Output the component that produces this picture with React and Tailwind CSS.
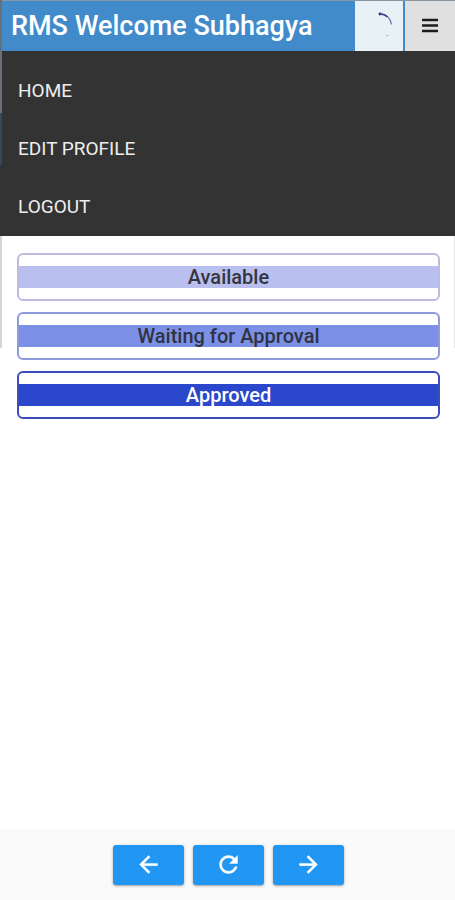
const links = ["HOME", "EDIT PROFILE", "LOGOUT"];

const statuses = [
  { label: "Available", border: "border-[#bcbce3]", band: "bg-[#b9bfee] text-[#34363f]" },
  { label: "Waiting for Approval", border: "border-[#8f9add]", band: "bg-[#7c90e8] text-[#2f3442]" },
  { label: "Approved", border: "border-[#3a4dba]", band: "bg-[#2b47cc] text-white" },
];

const controls = [
  { label: "Back", path: "M20 11H7.83l5.59-5.59L12 4l-8 8 8 8 1.41-1.41L7.83 13H20v-2z" },
  {
    label: "Refresh",
    path: "M17.65 6.35C16.2 4.9 14.21 4 12 4c-4.42 0-7.99 3.58-7.99 8s3.57 8 7.99 8c3.73 0 6.84-2.55 7.73-6h-2.08c-.82 2.33-3.04 4-5.65 4-3.31 0-6-2.69-6-6s2.69-6 6-6c1.66 0 3.14.69 4.22 1.78L13 11h7V4l-2.35 2.35z",
  },
  { label: "Forward", path: "M12 4l-1.41 1.41L16.17 11H4v2h12.17l-5.58 5.59L12 20l8-8-8-8z" },
];

function Spinner() {
  return (
    <svg width="48" height="48" viewBox="0 0 48 48" fill="none" aria-hidden="true">
      <circle cx="25" cy="12" r="1.4" fill="#172a80" />
      <path d="M25 12C31 12 35.5 16 36.5 22.5" stroke="#7780ad" strokeWidth="1.4" />
      <path d="M25 12C28 12 30.5 13 32.5 15" stroke="#3a4788" strokeWidth="1.5" />
      <path d="M31 33.5h3" stroke="#b4c0cf" />
    </svg>
  );
}

function MenuIcon() {
  return (
    <svg width="18" height="16" viewBox="0 0 18 16" aria-hidden="true">
      <path d="M1 2h16M1 7.5h16M1 13h16" stroke="#1c1c1c" strokeWidth="2.6" />
    </svg>
  );
}

export default function App() {
  return (
    <div className="relative flex min-h-screen flex-col bg-white font-['Roboto',sans-serif]">
      <div className="absolute top-0 left-0 w-0.5" aria-hidden="true">
        <div className="h-[113px] bg-[#68717a]" />
        <div className="h-[52px] bg-[#34495b]" />
        <div className="h-[71px] bg-[#333333]" />
        <div className="h-28 bg-[#d5d5d5]" />
      </div>
      <div className="absolute top-[236px] right-0 h-28 w-px bg-[#e4e4e4]" aria-hidden="true" />

      <header className="flex h-[51px] border-t border-[#8a969f] bg-[#428bca]">
        <h1 className="flex flex-1 items-center pl-[11px] text-[27px] leading-8 font-medium whitespace-nowrap text-white">
          RMS Welcome Subhagya
        </h1>
        <button type="button" aria-label="Loading" className="flex w-12 items-center justify-center bg-[#e8f2f6]">
          <Spinner />
        </button>
        <button type="button" aria-label="Menu" className="ml-0.5 flex w-[50px] items-center justify-center bg-[#e0e0e0]">
          <MenuIcon />
        </button>
      </header>

      <nav className="flex flex-col bg-[#333333] pt-[11px]">
        {links.map((link) => (
          <a key={link} href="#" className="flex h-[58px] items-center px-[18px] text-[19px] leading-6 text-[#eeeeee]">
            {link}
          </a>
        ))}
      </nav>

      <main className="flex flex-1 flex-col gap-[11px] pt-[17px] pr-[15px] pl-[17px]">
        {statuses.map(({ label, border, band }) => (
          <button key={label} type="button" className={`flex h-12 flex-col rounded-md border-2 pt-[11px] ${border}`}>
            <span className={`block h-[22px] w-full text-center text-[20px] leading-[22px] font-medium ${band}`}>
              {label}
            </span>
          </button>
        ))}
      </main>

      <footer className="flex h-[71px] items-center justify-center gap-[9px] bg-[#fafafa] pl-0.5">
        {controls.map(({ label, path }) => (
          <button
            key={label}
            type="button"
            aria-label={label}
            className="flex h-10 w-[71px] items-center justify-center rounded-[3px] bg-[#2196f3] text-white shadow-sm shadow-black/30"
          >
            <svg width="27" height="27" viewBox="0 0 24 24" fill="currentColor" aria-hidden="true">
              <path d={path} stroke="currentColor" strokeWidth="0.4" />
            </svg>
          </button>
        ))}
      </footer>
    </div>
  );
}
